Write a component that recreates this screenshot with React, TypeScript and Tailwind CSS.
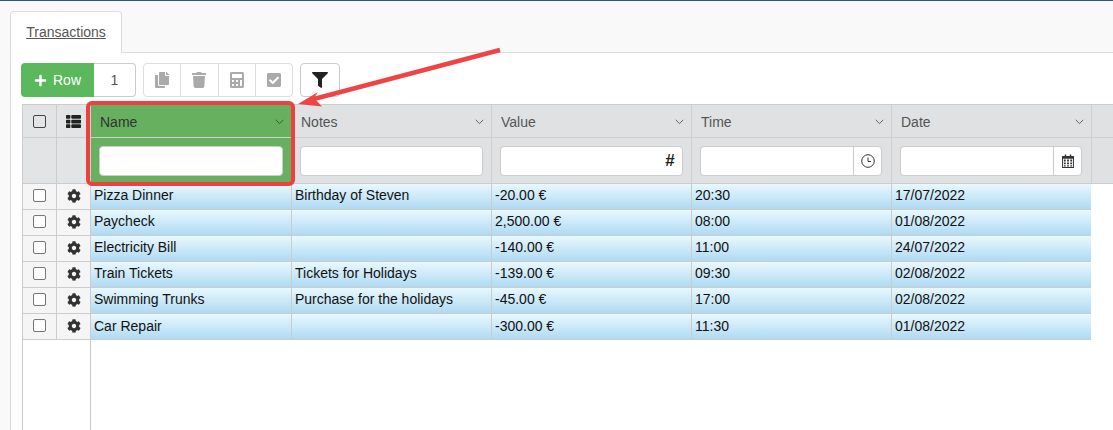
import React from "react";
import { FaCalculator, FaCheckSquare, FaCog, FaCopy, FaFilter, FaPlus, FaThList, FaTrash } from "react-icons/fa";

const rows = [
  ["Pizza Dinner", "Birthday of Steven", "-20.00 €", "20:30", "17/07/2022"],
  ["Paycheck", "", "2,500.00 €", "08:00", "01/08/2022"],
  ["Electricity Bill", "", "-140.00 €", "11:00", "24/07/2022"],
  ["Train Tickets", "Tickets for Holidays", "-139.00 €", "09:30", "02/08/2022"],
  ["Swimming Trunks", "Purchase for the holidays", "-45.00 €", "17:00", "02/08/2022"],
  ["Car Repair", "", "-300.00 €", "11:30", "01/08/2022"],
];

const Chevron = ({ color = "#5f6468" }: { color?: string }) => (
  <svg width="9" height="6" viewBox="0 0 9 6" fill="none" stroke={color} strokeWidth="1">
    <path d="M0.7 0.8 L4.5 4.6 L8.3 0.8" />
  </svg>
);

const HeaderCell = ({ label, green, w }: { label: string; green?: boolean; w: string }) => (
  <div className={`${w} h-full flex items-center justify-between pt-[2px] pl-[9px] pr-[7px] border-r border-[#cdcfd1] text-[14px] ${green ? "bg-[#66b060] text-[#333]" : "text-[#555]"}`}>
    <span>{label}</span>
    <Chevron color={green ? "#3f5f3c" : "#5f6468"} />
  </div>
);

const Addon = ({ children }: { children: React.ReactNode }) => (
  <div className="w-[28px] h-full flex items-center justify-center border-l border-[#ccc]">{children}</div>
);

const FilterCell = ({ w, green, pr = "pr-[8px]", children }: { w: string; green?: boolean; pr?: string; children?: React.ReactNode }) => (
  <div className={`${w} h-full flex items-center pl-[8px] ${pr} border-r border-[#cdcfd1] ${green ? "bg-[#66b060]" : ""}`}>
    <div className="w-full h-[30px] flex bg-white border border-[#ccc] rounded-[4px]">
      <div className="flex-1" />
      {children}
    </div>
  </div>
);

const toolBtn = "flex-1 h-full flex items-center justify-center text-[#aaa] text-[16px]";

export default function App() {
  return (
    <div className="relative w-[1113px] h-[430px] overflow-hidden bg-[#f9f9f9] border-t border-[#2b5583] font-['Liberation_Sans',Arial,sans-serif]">
      {/* tabs */}
      <div className="h-[51px] pl-[10px] pt-[10px] flex items-end">
        <div className="w-[112px] h-[42px] mb-[-1px] z-10 bg-white border border-b-0 border-[#ddd] rounded-t-[4px] flex items-center justify-center text-[14px] text-[#555] underline">
          Transactions
        </div>
      </div>

      {/* panel */}
      <div className="h-[378px] ml-[10px] bg-white border-l border-t border-[#ddd] pl-[10px] pt-[10px]">
        {/* toolbar */}
        <div className="h-[34px] flex">
          <button className="w-[73px] h-full bg-[#5cb85c] rounded-l-[4px] flex items-center justify-center gap-[6px] text-white text-[14px]">
            <FaPlus className="text-[13px]" />
            Row
          </button>
          <div className="w-[42px] h-full bg-white border border-l-0 border-[#ccc] rounded-r-[4px] flex items-center justify-center text-[14px] text-[#555]">1</div>
          <div className="ml-[7px] w-[150px] h-full flex border border-[#ddd] rounded-[4px] divide-x divide-[#ddd]">
            <div className={toolBtn}><FaCopy /></div>
            <div className={toolBtn}><FaTrash /></div>
            <div className={toolBtn}><FaCalculator /></div>
            <div className={toolBtn}><FaCheckSquare /></div>
          </div>
          <div className="ml-[7px] w-[40px] h-full bg-white border border-[#ccc] rounded-[4px] flex items-center justify-center text-[16px] text-[#222]">
            <FaFilter />
          </div>
        </div>

        {/* grid */}
        <div className="mt-[7px] ml-px relative w-[1102px] border-t border-[#ccc]">
          <div className="flex h-[79px] bg-[#e0e1e3] border-b border-[#ccc] border-l">
            <div className="w-[34px] h-full flex flex-col border-r border-[#ccc] bg-[#e3e4e5]">
              <div className="h-[33px] flex items-center justify-center border-b border-[#cdcfd1]">
                <div className="w-[13px] h-[13px] border-[1.5px] border-[#444] rounded-[2px]" />
              </div>
            </div>
            <div className="w-[34px] h-full flex flex-col border-r border-[#ccc] bg-[#e3e4e5]">
              <div className="h-[33px] flex items-center justify-center border-b border-[#cdcfd1] text-[#222] text-[15px]">
                <FaThList />
              </div>
            </div>
            <div className="flex-1 h-full flex flex-col">
              <div className="h-[33px] flex border-b border-[#cdcfd1]">
                <HeaderCell label="Name" green w="w-[201px]" />
                <HeaderCell label="Notes" w="w-[200px]" />
                <HeaderCell label="Value" w="w-[200px]" />
                <HeaderCell label="Time" w="w-[200px]" />
                <HeaderCell label="Date" w="w-[200px]" />
              </div>
              <div className="flex-1 flex">
                <FilterCell w="w-[201px]" green />
                <FilterCell w="w-[200px]" />
                <FilterCell w="w-[200px]">
                  <div className="w-[24px] h-full flex items-center justify-center text-[17px] font-bold text-[#222]">#</div>
                </FilterCell>
                <FilterCell w="w-[200px]" pr="pr-[9px]">
                  <Addon>
                    <svg width="14" height="14" viewBox="0 0 14 14" fill="none" stroke="#333" strokeWidth="1">
                      <circle cx="7" cy="7" r="6.3" />
                      <path d="M7 3.5 V7.5 H10" />
                    </svg>
                  </Addon>
                </FilterCell>
                <FilterCell w="w-[200px]" pr="pr-[9px]">
                  <Addon>
                    <svg width="12" height="14" viewBox="0 0 13 15" fill="#333">
                      <path d="M0 2h13v13H0z M1 5v9h11V5z" fillRule="evenodd" />
                      <path d="M3 0.5h1.5v3H3z M8.5 0.5H10v3H8.5z" />
                      <path d="M2 6h2v2H2z M5.5 6h2v2h-2z M9 6h2v2H9z M2 9h2v2H2z M5.5 9h2v2h-2z M9 9h2v2H9z M2 12h2v1.5H2z M5.5 12h2v1.5h-2z M9 12h2v1.5H9z" />
                    </svg>
                  </Addon>
                </FilterCell>
              </div>
            </div>
          </div>

          {/* rows */}
          <div className="h-[246px] flex">
            <div className="w-[69px] h-full border-l border-r border-[#ccc]">
              {rows.map((r) => (
                <div key={r[0]} className="h-[26px] flex bg-[#f5f5f5] border-b border-[#ccc] pb-0">
                  <div className="w-[34px] pb-[2px] flex items-center justify-center border-r border-[#ccc]">
                    <div className="w-[13px] h-[13px] bg-white border border-[#777] rounded-[2px]" />
                  </div>
                  <div className="flex-1 pb-[2px] flex items-center justify-center text-[14px] text-[#333]">
                    <FaCog />
                  </div>
                </div>
              ))}
            </div>
            <div className="flex-1">
              {rows.map((r) => (
                <div key={r[0]} className="h-[26px] flex border-b border-[#ccc] w-[1000px] bg-gradient-to-b from-[#e9f8fd] to-[#aedaf3] text-[14px] text-[#111] leading-[23px] last:leading-[25px]">
                  {r.map((c, i) => (
                    <div key={i} className={`${i === 0 ? "w-[201px]" : i === 4 ? "w-[199px]" : "w-[200px]"} pl-[3px] border-r border-[#ccc] last:border-r-0`}>
                      {c}
                    </div>
                  ))}
                </div>
              ))}
            </div>
          </div>

          {/* highlight round the Name column */}
          <div className="absolute left-[64px] top-[-4px] w-[209px] h-[85px] border-[4px] border-[#ef4040] rounded-[6px] pointer-events-none" />
        </div>
      </div>

      {/* annotation arrow */}
      <svg className="absolute left-0 top-0 pointer-events-none" width="1113" height="430" viewBox="0 0 1113 430">
        <path d="M500 49 L312 98.5" stroke="#ef4444" strokeWidth="4.5" fill="none" />
        <path d="M298 103 L318 91 L314 97 L322 105.5 Z" fill="#ef4444" />
      </svg>
    </div>
  );
}
